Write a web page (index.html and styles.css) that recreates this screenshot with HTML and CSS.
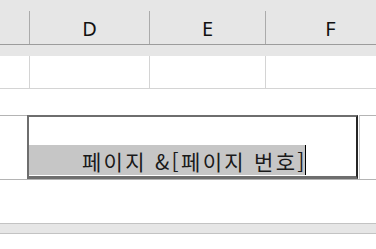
FILE: index.html
```html
<!DOCTYPE html>
<html lang="ko">

<head>
    <meta charset="UTF-8">
    <meta name="viewport" content="width=device-width, initial-scale=1.0">
    <title>Page Layout</title>
    <link rel="stylesheet" href="styles.css">
</head>

<body>
    <div class="sheet">
        <div class="col-header">
            <div class="col-cell first"></div>
            <div class="col-cell">D</div>
            <div class="col-cell">E</div>
            <div class="col-cell">F</div>
        </div>
        <div class="ruler-band"></div>
        <div class="grid-row">
            <div class="cell first"></div>
            <div class="cell"></div>
            <div class="cell"></div>
            <div class="cell"></div>
        </div>
        <div class="margin-gap"></div>
        <div class="footer-row">
            <div class="side left"></div>
            <div class="editor">
                <div class="editor-top"></div>
                <div class="editor-line">
                    <span class="selected">페이지 &amp;[페이지 번호]</span><span class="caret"></span>
                </div>
            </div>
            <div class="side right"></div>
        </div>
        <div class="bottom-gap"></div>
        <div class="page-break"></div>
    </div>
</body>

</html>
```

FILE: styles.css
```css
* {
    margin: 0;
    padding: 0;
    box-sizing: border-box;
}

body,
html {
    width: 376px;
    height: 249px;
    overflow: hidden;
    background: #ffffff;
    font-family: 'Noto Sans', 'Noto Sans CJK KR', sans-serif;
}

.sheet {
    display: flex;
    flex-direction: column;
    width: 100%;
    overflow: hidden;
}

.col-header {
    display: grid;
    grid-template-columns: 29px 120px 116px 130px;
    align-items: end;
    height: 45px;
    padding-top: 11px;
    background: #e6e6e6;
    border-bottom: 1px solid #9c9c9c;
}

.col-cell {
    height: 33px;
    display: flex;
    align-items: center;
    justify-content: center;
    border-left: 1px solid #ababab;
    color: #111;
    font-size: 20px;
    line-height: 1;
    padding-top: 2px;
}

.col-cell.first {
    border-left: none;
}

.ruler-band {
    height: 11px;
    background: #e6e6e6;
}

.grid-row {
    display: grid;
    grid-template-columns: 29px 120px 116px 130px;
    height: 33px;
    border-bottom: 1px solid #d4d4d4;
}

.cell {
    border-left: 1px solid #d4d4d4;
}

.cell.first {
    border-left: none;
}

.margin-gap {
    height: 26px;
}

.footer-row {
    display: grid;
    grid-template-columns: 27px 331px 1fr;
    height: 65px;
    border-bottom: 1px solid #b4b4b4;
}

.side {
    border-top: 1px solid #b4b4b4;
}

.side.right {
    margin-left: 1px;
    border-left: 1px solid #c8c8c8;
}

.editor {
    display: flex;
    flex-direction: column;
    border: 2px solid #6e6e6e;
    border-right-color: #262626;
    border-bottom-width: 3px;
}

.editor-top {
    height: 28px;
}

.editor-line {
    display: flex;
    align-items: stretch;
    height: 30px;
}

.selected {
    display: flex;
    align-items: center;
    width: 276px;
    padding-left: 53px;
    background: #c6c6c6;
    color: #1a1a1a;
    font-family: 'Noto Sans CJK KR', 'Noto Sans', sans-serif;
    font-size: 21px;
    letter-spacing: 2.3px;
    white-space: nowrap;
    line-height: 1;
    padding-top: 2px;
}

.caret {
    width: 1px;
    background: #000;
}

.bottom-gap {
    height: 43px;
}

.page-break {
    height: 11px;
    background: #e6e6e6;
    border-top: 1px solid #c3c3c3;
    border-bottom: 1px solid #c3c3c3;
}
```
